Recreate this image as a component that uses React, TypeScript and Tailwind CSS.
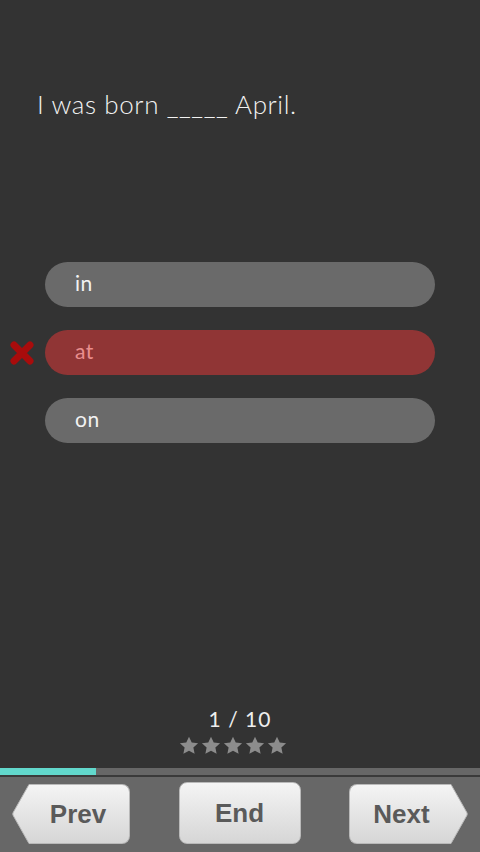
import React from 'react';

const options = [
  { label: 'in', wrong: false },
  { label: 'at', wrong: true },
  { label: 'on', wrong: false },
];

const Star = () => (
  <svg width="20" height="19" viewBox="0 0 24 23" className="fill-[#8c8c8c]">
    <path d="M12 0.8l3.3 7 7.7 0.9-5.7 5.3 1.5 7.6L12 17.8l-6.8 3.8 1.5-7.6L1 8.7l7.7-0.9z" />
  </svg>
);

const CrossMark = () => (
  <svg width="26" height="26" viewBox="0 0 26 26">
    <path d="M5 5L21 21M21 5L5 21" stroke="#a80c0c" strokeWidth="7" strokeLinecap="round" />
  </svg>
);

// Arrow tip for the Prev / Next buttons, same gradient as the body
const ArrowTip = ({ dir }: { dir: 'left' | 'right' }) => (
  <svg width="19" height="60" viewBox="0 0 19 60" className="shrink-0">
    <defs>
      <linearGradient id={`g-${dir}`} x1="0" y1="0" x2="0" y2="1">
        <stop offset="0" stopColor="#f4f4f4" />
        <stop offset="1" stopColor="#d6d6d6" />
      </linearGradient>
    </defs>
    {dir === 'left' ? (
      <path d="M19.5 0.5H17L1.2 28.5Q0.4 30 1.2 31.5L17 59.5H19.5Z" fill={`url(#g-${dir})`} stroke="#b9b9b9" strokeWidth="1" />
    ) : (
      <path d="M-0.5 0.5H2L17.8 28.5Q18.6 30 17.8 31.5L2 59.5H-0.5Z" fill={`url(#g-${dir})`} stroke="#b9b9b9" strokeWidth="1" />
    )}
  </svg>
);

const btnText = "text-[26px] font-bold text-[#5a5a5a] [font-family:'Liberation_Sans',Arial,sans-serif]";

export default function App() {
  return (
    <div className="h-[852px] w-[480px] flex flex-col bg-[#333333] [font-family:'Lato','Open_Sans',sans-serif]">
      {/* Question */}
      <div className="pt-[87px] pl-[37px] text-[26px] tracking-[0.6px] font-light text-[#f2f2f2] leading-[34px]">
        I was born _____ April.
      </div>

      {/* Answers */}
      <div className="mt-[141px] flex flex-col gap-[23px]">
        {options.map((o) => (
          <div key={o.label} className="flex items-center">
            <div className="w-[45px] flex justify-center pl-[1px] pr-[2px]">{o.wrong && <CrossMark />}</div>
            <div
              className={`w-[390px] h-[45px] rounded-full flex items-center pl-[30px] pb-[3px] text-[21px] tracking-[0.5px] ${
                o.wrong ? 'bg-[#903535] text-[#e98e8e]' : 'bg-[#6a6a6a] text-[#f2f2f2]'
              }`}
            >
              {o.label}
            </div>
          </div>
        ))}
      </div>

      <div className="flex-1" />

      {/* Counter + stars */}
      <div className="flex flex-col items-center">
        <div className="text-[21px] tracking-[1px] text-[#eeeeee] leading-[24px]">1 / 10</div>
        <div className="mt-[5px] mr-[15px] flex gap-[2px]">
          {[0, 1, 2, 3, 4].map((i) => (
            <Star key={i} />
          ))}
        </div>
      </div>

      {/* Progress */}
      <div className="mt-[13px] h-[7px] flex bg-[#676767]">
        <div className="w-[96px] bg-[#62d8cc]" />
      </div>
      <div className="h-[2px] bg-[#3a3a3a]" />

      {/* Nav bar */}
      <div className="h-[75px] bg-[#676767] flex items-start pt-[7px] pl-[12px] pr-[12px] justify-between">
        <button className="flex h-[60px]">
          <ArrowTip dir="left" />
          <div className={`w-[99px] h-[60px] flex items-center justify-center pr-[4px] rounded-r-[8px] border border-l-0 border-[#b9b9b9] bg-gradient-to-b from-[#f4f4f4] to-[#d6d6d6] ${btnText}`}>
            Prev
          </div>
        </button>
        <button className={`w-[122px] h-[62px] -mt-[2px] ml-[30px] flex items-center justify-center rounded-[8px] border border-[#b9b9b9] bg-gradient-to-b from-[#f4f4f4] to-[#d6d6d6] ${btnText}`}>
          End
        </button>
        <button className="flex h-[60px] ml-[30px]">
          <div className={`w-[100px] h-[60px] flex items-center justify-center pl-[4px] rounded-l-[8px] border border-r-0 border-[#b9b9b9] bg-gradient-to-b from-[#f4f4f4] to-[#d6d6d6] ${btnText}`}>
            Next
          </div>
          <ArrowTip dir="right" />
        </button>
      </div>
    </div>
  );
}
